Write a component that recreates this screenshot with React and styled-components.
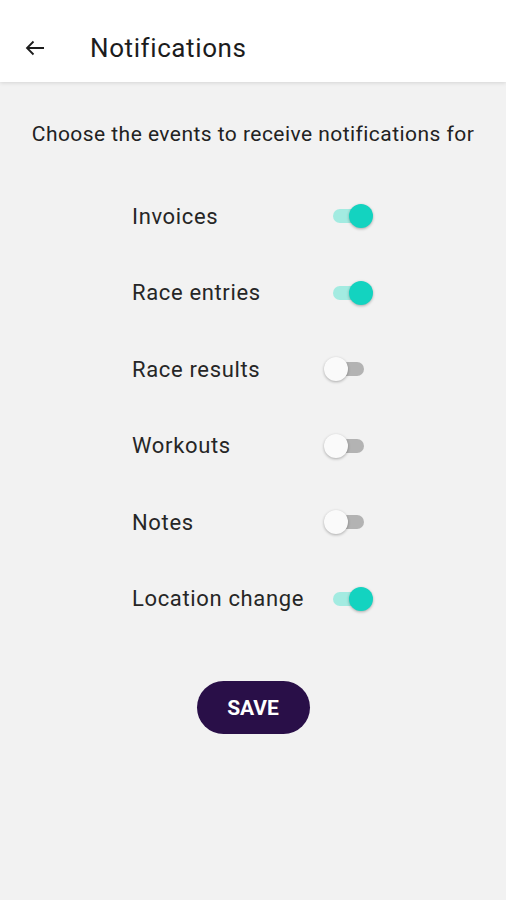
import React, { useState } from 'react';
import styled, { createGlobalStyle } from 'styled-components';

const GlobalStyle = createGlobalStyle`
  body {
    margin: 0;
    background: #f2f2f2;
    font-family: Roboto, "Noto Sans", sans-serif;
    color: #1f1f1f;
  }
`;

const Page = styled.div`
  min-height: 900px;
  background: #f2f2f2;
  display: flex;
  flex-direction: column;
`;

const Header = styled.header`
  height: 82px;
  box-sizing: border-box;
  background: #ffffff;
  display: flex;
  align-items: center;
  padding: 14px 0 0 22px;
  box-shadow: 0 1px 4px rgba(0, 0, 0, 0.12);
`;

const BackButton = styled.button`
  background: none;
  border: none;
  padding: 0;
  width: 26px;
  height: 26px;
  display: flex;
  align-items: center;
  justify-content: center;
  cursor: pointer;
  margin-right: 42px;
`;

const Title = styled.h1`
  margin: 0;
  font-size: 26px;
  font-weight: 400;
  color: #1c1c1c;
  letter-spacing: 0.6px;
`;

const Content = styled.main`
  display: flex;
  flex-direction: column;
  align-items: center;
  padding-top: 40px;
`;

const Subtitle = styled.p`
  margin: 0 0 32px;
  font-size: 21px;
  letter-spacing: 0.45px;
  color: #222;
  text-align: center;
`;

const List = styled.div`
  width: 242px;
  display: flex;
  flex-direction: column;
`;

const Row = styled.label`
  height: 76.5px;
  display: flex;
  align-items: center;
  justify-content: space-between;
  cursor: pointer;
`;

const Label = styled.span`
  font-size: 22px;
  letter-spacing: 0.65px;
  color: #262626;
`;

const Track = styled.span`
  position: relative;
  width: 31px;
  height: 14px;
  border-radius: 7px;
  margin-right: 10px;
  background: ${(p) => (p.on ? '#a3ebe1' : '#b3b3b3')};
`;

const Thumb = styled.span`
  position: absolute;
  top: -5px;
  left: ${(p) => (p.on ? '16px' : '-9px')};
  width: 24px;
  height: 24px;
  border-radius: 50%;
  background: ${(p) => (p.on ? '#13d3c0' : '#fafafa')};
  box-shadow: 0 1px 3px rgba(0, 0, 0, 0.3);
`;

const SaveButton = styled.button`
  margin-top: 44px;
  width: 113px;
  height: 53px;
  border: none;
  border-radius: 27px;
  background: #290f48;
  color: #ffffff;
  font-family: Roboto, sans-serif;
  font-size: 21px;
  font-weight: 700;
  cursor: pointer;
`;

const items = [
  ['Invoices', true],
  ['Race entries', true],
  ['Race results', false],
  ['Workouts', false],
  ['Notes', false],
  ['Location change', true],
];

export default function App() {
  const [state, setState] = useState(items.map((i) => i[1]));

  const toggle = (idx) => {
    setState((s) => s.map((v, i) => (i === idx ? !v : v)));
  };

  return (
    <Page>
      <GlobalStyle />
      <Header>
        <BackButton aria-label="Back">
          <svg width="24" height="24" viewBox="0 0 24 24" fill="none" stroke="#1c1c1c" strokeWidth="1.8">
            <path d="M21 12H4M10.5 5.5L4 12l6.5 6.5" />
          </svg>
        </BackButton>
        <Title>Notifications</Title>
      </Header>
      <Content>
        <Subtitle>Choose the events to receive notifications for</Subtitle>
        <List>
          {items.map(([name], i) => (
            <Row key={name} onClick={() => toggle(i)}>
              <Label>{name}</Label>
              <Track on={state[i] ? 1 : 0}>
                <Thumb on={state[i] ? 1 : 0} />
              </Track>
            </Row>
          ))}
        </List>
        <SaveButton>SAVE</SaveButton>
      </Content>
    </Page>
  );
}
